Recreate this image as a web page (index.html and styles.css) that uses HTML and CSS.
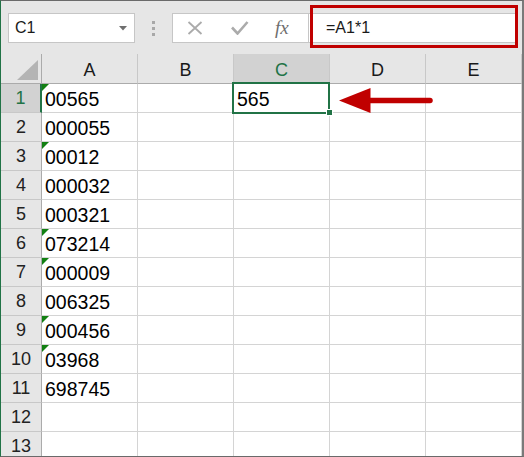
FILE: index.html
```html
<!DOCTYPE html>
<html>
<head>
<meta charset="utf-8">
<link rel="stylesheet" href="styles.css">
</head>
<body>
<div class="frame">
  <div class="toolbar">
    <div class="namebox">
      <span class="namebox-text">C1</span>
      <svg class="namebox-caret" width="8" height="5" viewBox="0 0 8 5"><polygon points="0,0 8,0 4,4.5" fill="#6f6f6f"/></svg>
    </div>
    <div class="grip"><i></i><i></i><i></i></div>
    <div class="fxbox">
      <svg class="icon-x" width="16" height="14" viewBox="0 0 16 14"><path d="M1.5 1 L14.5 13 M14.5 1 L1.5 13" stroke="#ababab" stroke-width="1.8" fill="none"/></svg>
      <svg class="icon-check" width="18" height="14" viewBox="0 0 18 14"><path d="M1 6.5 L6.5 12.5 L16.5 1" stroke="#ababab" stroke-width="2.6" fill="none"/></svg>
      <span class="icon-fx">fx</span>
    </div>
    <div class="formula">=A1*1</div>
  </div>
  <div class="sheet">
    <div class="corner"><svg width="21" height="20" viewBox="0 0 21 20"><polygon points="21,0 21,20 0,20" fill="#b4b4b4"/></svg></div>
    <div class="colhead">A</div>
    <div class="colhead">B</div>
    <div class="colhead colhead-sel">C</div>
    <div class="colhead">D</div>
    <div class="colhead">E</div>

    <div class="rowhead rowhead-sel">1</div>
    <div class="cell err">00565</div><div class="cell"></div>
    <div class="cell active">565<div class="selbox"></div><div class="handle"></div></div>
    <div class="cell"></div><div class="cell"></div>

    <div class="rowhead">2</div>
    <div class="cell">000055</div><div class="cell"></div><div class="cell"></div><div class="cell"></div><div class="cell"></div>

    <div class="rowhead">3</div>
    <div class="cell err">00012</div><div class="cell"></div><div class="cell"></div><div class="cell"></div><div class="cell"></div>

    <div class="rowhead">4</div>
    <div class="cell">000032</div><div class="cell"></div><div class="cell"></div><div class="cell"></div><div class="cell"></div>

    <div class="rowhead">5</div>
    <div class="cell">000321</div><div class="cell"></div><div class="cell"></div><div class="cell"></div><div class="cell"></div>

    <div class="rowhead">6</div>
    <div class="cell err">073214</div><div class="cell"></div><div class="cell"></div><div class="cell"></div><div class="cell"></div>

    <div class="rowhead">7</div>
    <div class="cell err">000009</div><div class="cell"></div><div class="cell"></div><div class="cell"></div><div class="cell"></div>

    <div class="rowhead">8</div>
    <div class="cell">006325</div><div class="cell"></div><div class="cell"></div><div class="cell"></div><div class="cell"></div>

    <div class="rowhead">9</div>
    <div class="cell err">000456</div><div class="cell"></div><div class="cell"></div><div class="cell"></div><div class="cell"></div>

    <div class="rowhead">10</div>
    <div class="cell err">03968</div><div class="cell"></div><div class="cell"></div><div class="cell"></div><div class="cell"></div>

    <div class="rowhead">11</div>
    <div class="cell">698745</div><div class="cell"></div><div class="cell"></div><div class="cell"></div><div class="cell"></div>

    <div class="rowhead">12</div>
    <div class="cell"></div><div class="cell"></div><div class="cell"></div><div class="cell"></div><div class="cell"></div>

    <div class="rowhead">13</div>
    <div class="cell"></div><div class="cell"></div><div class="cell"></div><div class="cell"></div><div class="cell"></div>
  </div>
  <div class="callout"></div>
  <svg class="arrow" width="100" height="30" viewBox="0 0 100 30">
    <polygon points="2,14.5 33.5,2 33.5,27" fill="#c00000"/>
    <line x1="30" y1="14.5" x2="93" y2="14.5" stroke="#c00000" stroke-width="5.5" stroke-linecap="round"/>
  </svg>
</div>
</body>
</html>
```
FILE: styles.css
```css
html, body {
  margin: 0;
  padding: 0;
  background: #ffffff;
}

.frame {
  position: relative;
  width: 524px;
  height: 457px;
  box-sizing: border-box;
  border-top: 1px solid #6a6a6a;
  border-left: 1px solid #217346;
  border-right: 2px solid #7a7a7a;
  border-bottom: 1px solid #6a6a6a;
  overflow: hidden;
  font-family: "Liberation Sans", Arial, sans-serif;
  color: #000;
}

.toolbar {
  height: 53px;
  box-sizing: border-box;
  background: #e6e6e6;
  display: flex;
  align-items: flex-start;
  padding: 12px 6px 0 7px;
}

.namebox {
  width: 127px;
  height: 30px;
  box-sizing: border-box;
  border: 1px solid #c6c6c6;
  background: #fff;
  display: flex;
  align-items: center;
  padding-left: 6px;
  position: relative;
}

.namebox-text {
  font-size: 16px;
  line-height: 28px;
  color: #1a1a1a;
  flex: 1;
}

.namebox-caret {
  margin-right: 7px;
  margin-top: 1px;
}

.grip {
  margin-left: 17px;
  margin-top: 8px;
  display: flex;
  flex-direction: column;
  gap: 3px;
}

.grip i {
  display: block;
  width: 3px;
  height: 3px;
  background: #a8a8a8;
}

.fxbox {
  margin-left: 17px;
  width: 137px;
  height: 30px;
  box-sizing: border-box;
  border: 1px solid #c6c6c6;
  background: #fff;
  display: flex;
  align-items: center;
}

.icon-x {
  margin-left: 14px;
}

.icon-check {
  margin-left: 28px;
}

.icon-fx {
  margin-left: 26px;
  font-family: "Liberation Serif", "Times New Roman", serif;
  font-style: italic;
  font-size: 19px;
  color: #6e6e6e;
  line-height: 28px;
}

.formula {
  flex: 1;
  height: 30px;
  box-sizing: border-box;
  border: 1px solid #c6c6c6;
  border-left: none;
  background: #fff;
  padding-left: 17px;
  font-size: 16px;
  line-height: 28px;
  color: #1a1a1a;
}

.sheet {
  display: grid;
  grid-template-columns: 41px repeat(5, 96px);
  grid-auto-rows: 29px;
  grid-template-rows: 30px;
}

.corner {
  background: #e6e6e6;
  box-sizing: border-box;
  border-right: 1px solid #ababab;
  border-bottom: 1px solid #ababab;
  padding: 6px 0 0 16px;
}

.corner svg {
  display: block;
}

.colhead {
  background: #e6e6e6;
  box-sizing: border-box;
  border-right: 1px solid #c8c8c8;
  border-bottom: 1px solid #ababab;
  text-align: center;
  font-size: 18px;
  line-height: 26px;
  padding-top: 3px;
  color: #1a1a1a;
}

.colhead-sel {
  background: #d2d2d2;
  color: #217346;
}

.rowhead {
  background: #e6e6e6;
  box-sizing: border-box;
  border-right: 1px solid #ababab;
  border-bottom: 1px solid #c8c8c8;
  text-align: center;
  font-size: 18px;
  line-height: 27px;
  padding-top: 1px;
  color: #222;
}

.rowhead-sel {
  background: #d2d2d2;
  color: #217346;
  border-right: 2px solid #217346;
}

.cell {
  position: relative;
  background: #fff;
  box-sizing: border-box;
  border-right: 1px solid #d4d4d4;
  border-bottom: 1px solid #d4d4d4;
  padding: 1px 0 0 3px;
  font-size: 19.5px;
  line-height: 28px;
  white-space: nowrap;
}

.err::before {
  content: "";
  position: absolute;
  left: 0;
  top: 0;
  width: 0;
  height: 0;
  border-top: 7px solid #128012;
  border-right: 7px solid transparent;
}

.active {
  z-index: 2;
}

.selbox {
  position: absolute;
  left: -2px;
  top: -2px;
  width: 98px;
  height: 32px;
  box-sizing: border-box;
  border: 2px solid #217346;
}

.handle {
  position: absolute;
  left: 93px;
  top: 26px;
  width: 5px;
  height: 5px;
  background: #217346;
  box-shadow: 0 0 0 1px #fff;
}

.callout {
  position: absolute;
  left: 309px;
  top: 4px;
  width: 208px;
  height: 43px;
  box-sizing: border-box;
  border: 3px solid #c00000;
}

.arrow {
  position: absolute;
  left: 336px;
  top: 85px;
}
```
